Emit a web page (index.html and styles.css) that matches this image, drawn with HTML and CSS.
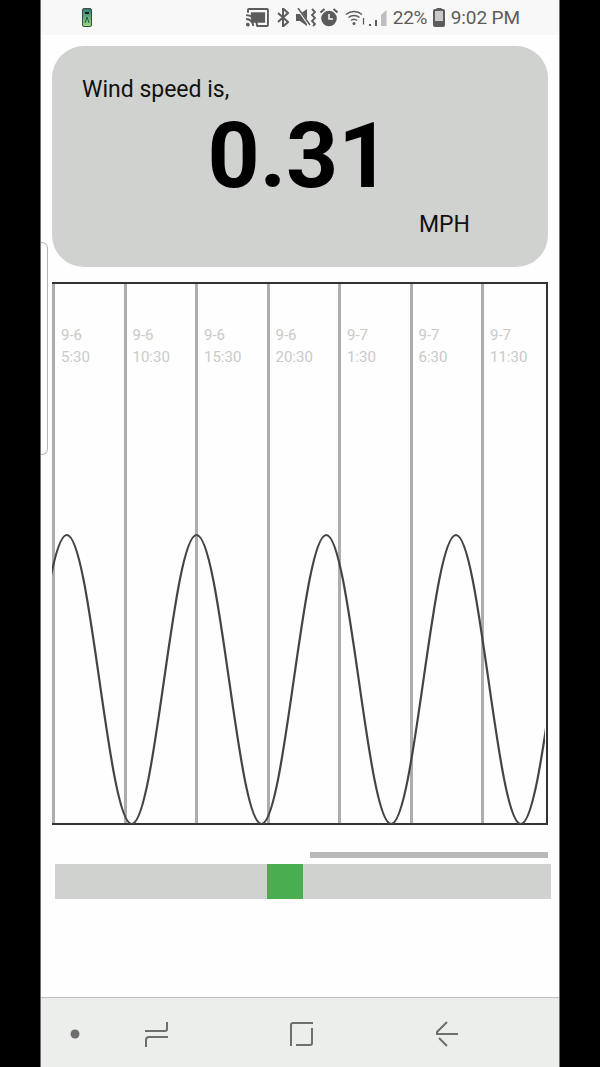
FILE: index.html
```html
<!DOCTYPE html>
<html lang="en">
<head>
<meta charset="utf-8">
<title>Wind speed</title>
<link rel="stylesheet" href="styles.css">
</head>
<body>
<div class="phone">
  <header class="status">
    <svg class="app-icon" viewBox="0 0 10 19" width="10" height="19">
      <defs><linearGradient id="g" x1="0" y1="0" x2="0" y2="1"><stop offset="0" stop-color="#2f7f78"/><stop offset="1" stop-color="#9bdc7a"/></linearGradient></defs>
      <rect x="0.5" y="0.5" width="9" height="18" rx="1.5" fill="url(#g)" stroke="#3a4a44"/>
      <rect x="3" y="4" width="4" height="2" fill="#123"/>
      <path d="M3 15 L5 9 L7 15" fill="none" stroke="#35524a"/>
    </svg>
    <div class="status-right">
      <svg class="ic-cast" viewBox="0 0 24 20" width="23" height="19"><path d="M2 5V2a1 1 0 0 1 1-1h19a1 1 0 0 1 1 1v16a1 1 0 0 1-1 1H11" fill="none" stroke="#5c5c5c" stroke-width="2"/><rect x="5" y="4.500" width="15" height="11" fill="#5c5c5c"/><path d="M0 7.500a11.500 11.500 0 0 1 11.500 11.500M0 11.500a7.500 7.500 0 0 1 7.500 7.500" fill="none" stroke="#5c5c5c" stroke-width="2"/><circle cx="1.800" cy="17.500" r="2" fill="#5c5c5c"/></svg>
      <svg class="ic-bt" viewBox="0 0 12 19" width="12" height="19"><path d="M1 5l10 9-5 4.500V.5l5 4.500L1 14" fill="none" stroke="#5c5c5c" stroke-width="2"/></svg>
      <svg class="ic-mute" viewBox="0 0 20 19" width="20" height="19"><path d="M0 6h4l7-5v17l-7-5H0z" fill="#5c5c5c"/><path d="M2 1l12 17" stroke="#f7f8f7" stroke-width="2.500"/><path d="M2 0l12 17" stroke="#5c5c5c" stroke-width="1.500"/><path d="M16 1l3 3-3 3 3 3-3 3 3 3-2 2" fill="none" stroke="#5c5c5c" stroke-width="1.800"/></svg>
      <svg class="ic-alarm" viewBox="0 0 18 19" width="18" height="19"><circle cx="9" cy="10.500" r="7.800" fill="#5c5c5c"/><path d="M9 6v5h4" fill="none" stroke="#f7f8f7" stroke-width="1.500"/><path d="M.5 4.500L4.500 1M17.500 4.500L13.500 1" stroke="#5c5c5c" stroke-width="2"/></svg>
      <svg class="ic-wifi" viewBox="0 0 20 17" width="20" height="17"><path d="M1 5.500a12.500 12.500 0 0 1 16 0M3.500 8.500a8.500 8.500 0 0 1 11 0M6 11.500a4.500 4.500 0 0 1 6 0" fill="none" stroke="#5c5c5c" stroke-width="1.500"/><circle cx="9" cy="14.500" r="1.500" fill="#5c5c5c"/><path d="M18.500 9v6.500" stroke="#5c5c5c" stroke-width="1.300"/></svg>
      <svg class="ic-signal" viewBox="0 0 18 18" width="18" height="18"><rect x="0" y="15" width="2" height="2" fill="#5c5c5c"/><rect x="6" y="11" width="2" height="6" fill="#5c5c5c"/><path d="M12 17V6l5.500-5V17z" fill="#bdbfbd"/></svg>
      <span class="pct">22%</span>
      <svg class="ic-batt" viewBox="0 0 12 19" width="12" height="19"><rect x="3.500" y="0" width="5" height="2" fill="#5c5c5c"/><rect x="1" y="2" width="10" height="16" rx="1" fill="#c9cac8" stroke="#5c5c5c" stroke-width="2"/><rect x="1" y="13" width="10" height="5" fill="#5c5c5c"/></svg>
      <span class="time">9:02 PM</span>
    </div>
  </header>

  <main class="content">
    <section class="card">
      <p class="card-label">Wind speed is,</p>
      <p class="card-value">0.31</p>
      <p class="card-unit">MPH</p>
    </section>

    <section class="chart">
      <div class="col"><span>9-6</span><span>5:30</span></div>
      <div class="col"><span>9-6</span><span>10:30</span></div>
      <div class="col"><span>9-6</span><span>15:30</span></div>
      <div class="col"><span>9-6</span><span>20:30</span></div>
      <div class="col"><span>9-7</span><span>1:30</span></div>
      <div class="col"><span>9-7</span><span>6:30</span></div>
      <div class="col"><span>9-7</span><span>11:30</span></div>
      <svg class="curve" viewBox="0 0 493 540" width="493" height="540">
        <path d="M-50 540C-26.400 540-8.800 251 14.850 251S56.100 540 79.700 540 120.900 251 144.550 251 185.800 540 209.400 540 250.600 251 274.250 251 315.500 540 339.100 540 380.300 251 403.950 251 445.200 540 468.800 540 510 251 533.650 251" fill="none" stroke="#444" stroke-width="2.200"/>
      </svg>
    </section>

    <div class="progress"></div>
    <div class="slider"><div class="thumb"></div></div>
  </main>

  <nav class="navbar">
    <svg viewBox="0 0 520 70" width="520" height="70">
      <g transform="translate(-40 -998)" fill="none" stroke="#6e6e6e" stroke-width="2">
        <circle cx="75" cy="1034" r="4.500" fill="#6e6e6e" stroke="none"/>
        <path d="M167 1022v7a2 2 0 0 1-2 2H145M146 1047v-7a3 3 0 0 1 3-3h19"/>
        <path d="M291 1046v-21a2 2 0 0 1 2-2h20M312 1028v15a2 2 0 0 1-2 2h-14"/>
        <path d="M447 1022l-10 10v2h21M439 1038l8 8"/>
      </g>
    </svg>
  </nav>
  <div class="edge-handle"></div>
</div>
</body>
</html>
```
FILE: styles.css
```css
* { box-sizing: border-box; }
html, body { margin: 0; height: 100%; background: #000; }
body { font-family: Roboto, "Liberation Sans", sans-serif; overflow: hidden; }
p { margin: 0; }

.phone {
  position: relative;
  width: 520px;
  height: 1067px;
  margin: 0 40px;
  display: flex;
  flex-direction: column;
  background: #fdfefd;
  border-left: 1px solid #6f6f6f;
  border-right: 1px solid #6f6f6f;
}

.status {
  height: 35px;
  flex: none;
  display: flex;
  align-items: center;
  justify-content: space-between;
  padding: 0 39px 0 41px;
  background: #f7f8f7;
  color: #5c5c5c;
}
.status-right { display: flex; align-items: center; height: 35px; }
.status-right svg { flex: none; }
.ic-cast { margin-right: 8px; }
.ic-bt { margin-right: 7px; }
.ic-mute { margin-right: 4px; }
.ic-alarm { margin-right: 7px; }
.ic-wifi { margin-right: 4px; }
.ic-signal { margin-right: 6px; }
.pct { font-size: 19px; width: 40px; letter-spacing: -0.300px; }
.ic-batt { margin-right: 6px; }
.time { font-size: 19px; letter-spacing: -0.100px; }

.content {
  flex: 1;
  display: flex;
  flex-direction: column;
  padding: 11px 11px 0;
}

.card {
  height: 221px;
  width: 496px;
  flex: none;
  padding: 30px 31px 0;
  background: #d0d2cf;
  border-radius: 32px;
  color: #000;
}
.card-label { font-size: 23px; line-height: 27px; color: #111; margin-left: -1px; }
.card-value {
  margin-top: 7px;
  margin-left: -2px;
  font-size: 91px;
  line-height: 93px;
  font-weight: 700;
  text-align: center;
}
.card-unit { margin: 8px 0 0 336px; font-size: 23px; line-height: 27px; color: #111; }

.chart {
  position: relative;
  width: 496px;
  height: 543px;
  margin-top: 15px;
  flex: none;
  display: grid;
  grid-template-columns: repeat(7, 71.500px);
  border: 2px solid #333;
  border-left: none;
}
.col {
  display: flex;
  flex-direction: column;
  padding: 40px 0 0 6px;
  border-left: 3px solid #adaeac;
  font-size: 15px;
  line-height: 22px;
  color: #c9cac8;
}
.curve { position: absolute; left: 0; top: 0; overflow: hidden; }

.progress {
  align-self: flex-end;
  width: 238px;
  height: 6px;
  margin-top: 27px;
  flex: none;
  background: #b9bab8;
}
.slider {
  width: 496px;
  height: 35px;
  margin: 6px 0 0 3px;
  flex: none;
  padding-left: 212px;
  background: #d0d2cf;
}
.thumb { width: 36px; height: 35px; background: #4aad4f; }

.navbar {
  height: 70px;
  flex: none;
  background: #eceeec;
  border-top: 1px solid #bfc0be;
}
.navbar svg { display: block; margin-left: -1px; }

.edge-handle {
  position: absolute;
  left: 0;
  top: 242px;
  width: 7px;
  height: 213px;
  border: 1px solid #b5b6b4;
  border-left: none;
  border-radius: 0 6px 6px 0;
}
```
